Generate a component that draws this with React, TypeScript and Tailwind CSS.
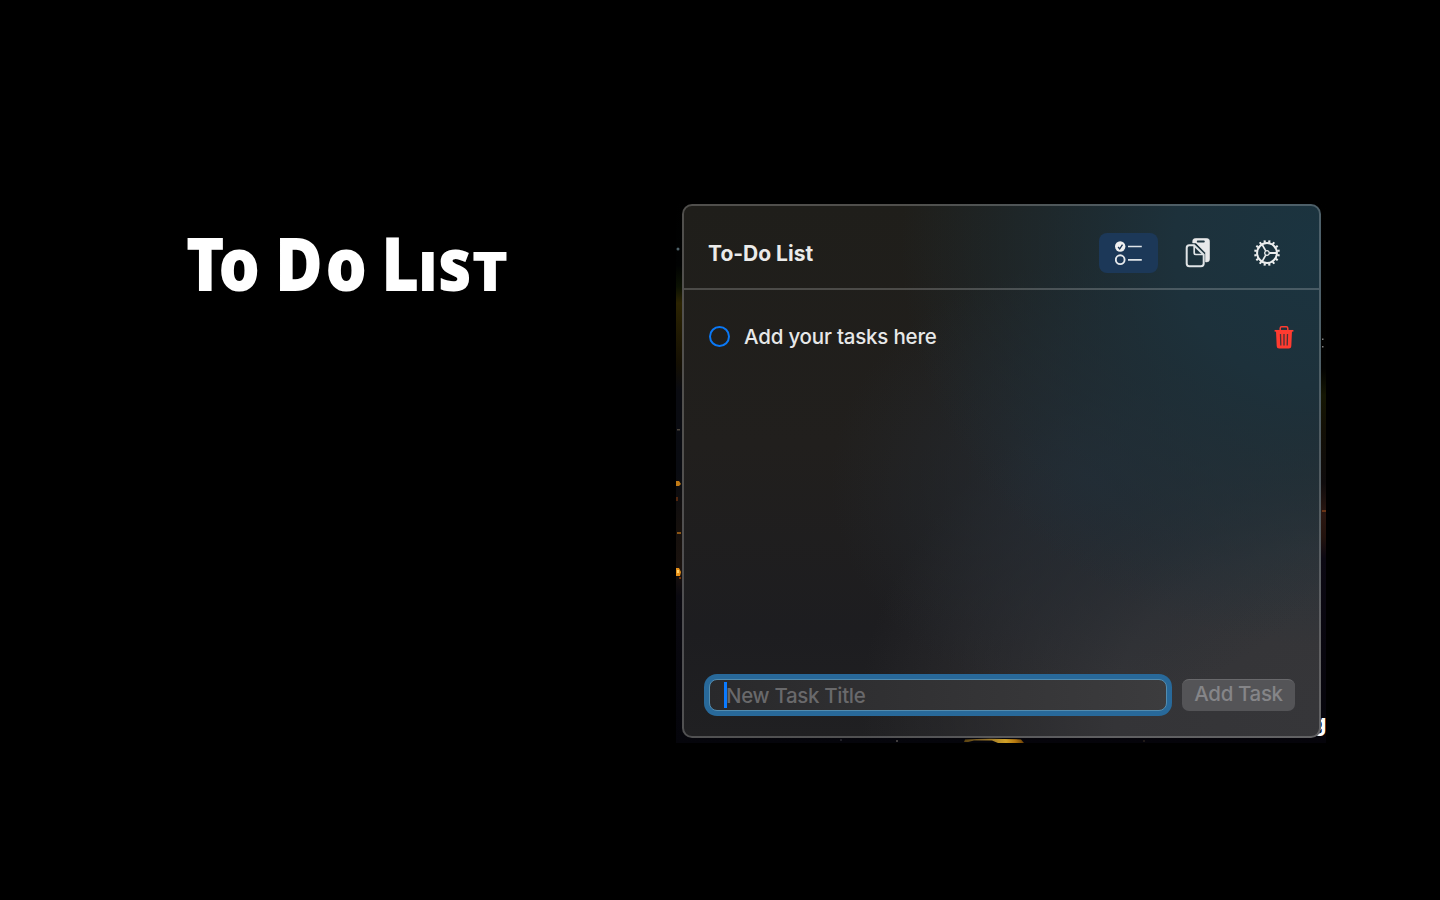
import type { ReactNode } from "react";

function Backdrop() {
  return (
    <svg className="absolute inset-0 h-full w-full" viewBox="0 0 650 543" aria-hidden="true">
      <defs>
        <linearGradient id="edgeLeft" x1="0" y1="0" x2="0" y2="1">
          <stop offset="0" stopColor="#000000" />
          <stop offset="0.12" stopColor="#010202" />
          <stop offset="0.16" stopColor="#0c1203" />
          <stop offset="0.19" stopColor="#2c2402" />
          <stop offset="0.3" stopColor="#151003" />
          <stop offset="0.35" stopColor="#0a0b11" />
          <stop offset="0.5" stopColor="#090b11" />
          <stop offset="0.6" stopColor="#15100d" />
          <stop offset="0.68" stopColor="#1a120e" />
          <stop offset="0.73" stopColor="#0a0910" />
          <stop offset="1" stopColor="#05050b" />
        </linearGradient>
        <linearGradient id="edgeRight" x1="0" y1="0" x2="0" y2="1">
          <stop offset="0" stopColor="#000000" />
          <stop offset="0.31" stopColor="#020201" />
          <stop offset="0.36" stopColor="#141603" />
          <stop offset="0.42" stopColor="#120f05" />
          <stop offset="0.52" stopColor="#0e0b0c" />
          <stop offset="0.58" stopColor="#2a1610" />
          <stop offset="0.62" stopColor="#22120d" />
          <stop offset="0.66" stopColor="#0b0812" />
          <stop offset="1" stopColor="#05040a" />
        </linearGradient>
        <linearGradient id="glow" x1="0" y1="0" x2="1" y2="0">
          <stop offset="0" stopColor="#5b4310" />
          <stop offset="0.3" stopColor="#8a6a2a" />
          <stop offset="0.7" stopColor="#d0a128" />
          <stop offset="0.85" stopColor="#b87a10" />
          <stop offset="1" stopColor="#6a4008" />
        </linearGradient>
      </defs>
      <rect x="0" y="0" width="325" height="543" fill="url(#edgeLeft)" />
      <rect x="325" y="0" width="325" height="543" fill="url(#edgeRight)" />
      <circle cx="2" cy="49" r="1.5" fill="#50636b" />
      <rect x="1" y="229" width="3" height="1.5" fill="#4b443c" />
      <path d="M0 281h3l2 3-2 2H0z" fill="#c07a16" />
      <rect x="0" y="297" width="2" height="4" fill="#51260e" />
      <rect x="1" y="332" width="4" height="2" fill="#8a5515" />
      <path d="M0 368h3l2 4-1 4H0z" fill="#e8921a" />
      <rect x="1" y="370" width="2" height="3" fill="#ffd36b" />
      <rect x="3" y="377" width="2" height="2" fill="#7a3606" />
      <rect x="646" y="138.500" width="1.5" height="1.5" fill="#7d7d7d" />
      <rect x="646" y="146" width="1.5" height="1.5" fill="#7d7d7d" />
      <rect x="646" y="310" width="4" height="2" fill="#6a3416" />
      <path d="M289 539.500q22-1.500 56 0l3 3.500h-26l-6-2.500-18 0-6 1.500h-4z" fill="url(#glow)" />
      <circle cx="221" cy="541" r="1" fill="#55504f" />
      <circle cx="165" cy="540" r="1" fill="#2a2830" />
      <circle cx="468" cy="541" r="1" fill="#29201c" />
    </svg>
  );
}

function ChecklistIcon() {
  return (
    <svg className="h-[26px] w-7" viewBox="0.500 0 28 26" fill="none">
      <circle cx="5.700" cy="6.500" r="5.200" fill="#f0f0f0" />
      <path d="M3.600 7l1.600 1.900L8 4.600" stroke="#1c3656" strokeWidth="1.300" />
      <circle cx="5.700" cy="19.700" r="4.400" stroke="#e6e9ec" strokeWidth="1.900" />
      <path d="M13.500 6.500h13.800M13.500 19.900h13.800" stroke="#dfe4e8" strokeWidth="1.700" />
    </svg>
  );
}

function DocumentsIcon() {
  return (
    <svg className="h-[30px] w-[26px]" viewBox="-0.500 0.500 26 30" fill="none">
      <path
        d="M9.900 1H21.300Q24 1 24 3.700V21.700Q24 24.400 21.300 24.400H20V15.300L10.500 5.400H7.200V3.700Q7.200 1 9.900 1z"
        fill="#e9e9ea"
        stroke="#e9e9ea"
        strokeWidth="0.600"
      />
      <rect x="11.300" y="3" width="8" height="1.900" rx="0.900" fill="#203640" />
      <path
        d="M3.800 7.800H8.500L18.200 17.200V26Q18.200 28.700 15.500 28.700H3.800Q1.200 28.700 1.200 26V10.400Q1.200 7.800 3.800 7.800z"
        fill="#1c313b"
        stroke="#e0e4e6"
        strokeWidth="2"
      />
      <path d="M8.700 8v7.300Q8.700 17 10.400 17h7.600" stroke="#e0e4e6" strokeWidth="1.700" />
    </svg>
  );
}

const TEETH = Array.from({ length: 16 }, (_, i) => i * 22.5 + 11.25);

function GearIcon() {
  return (
    <svg className="h-[28px] w-[28px]" viewBox="-14 -14 28 28" fill="none" stroke="#eceeee">
      <circle r="9.900" strokeWidth="2" />
      {TEETH.map((a) => (
        <path key={a} d="M10.500 0H12.900" strokeWidth="2.100" transform={`rotate(${a})`} />
      ))}
      <circle r="2.300" strokeWidth="1.300" />
      <path d="M2.500 0H9.500" strokeWidth="2" />
      <path d="M2.500 0H9.500" strokeWidth="1.700" transform="rotate(120)" />
      <path d="M2.500 0H9.500" strokeWidth="1.700" transform="rotate(240)" />
    </svg>
  );
}

function TrashIcon() {
  return (
    <svg className="h-6 w-5" viewBox="0 0 20 24" fill="none">
      <path d="M6.200 5V3.300Q6.200 1.700 7.700 1.700h4.600q1.500 0 1.500 1.600V5" stroke="#ff3b30" strokeWidth="1.500" />
      <path d="M.6 5.800h18.800" stroke="#ff3b30" strokeWidth="1.700" />
      <path d="M2 6h16l-.7 15.200q-.1 2.300-2.400 2.300H5.100q-2.300 0-2.400-2.300z" fill="#ff3b30" />
      <path d="M6.500 9l.3 11.500M10 9v11.500M13.500 9l-.3 11.500" stroke="#4b3236" strokeWidth="1.300" />
    </svg>
  );
}

function TabButton({ active, children }: { active?: boolean; children: ReactNode }) {
  return (
    <button
      className={`flex h-10 w-[59px] items-center justify-center rounded-lg ${active ? "bg-[#1c3858]" : ""}`}
    >
      {children}
    </button>
  );
}

function Header() {
  return (
    <header className="flex h-[84px] items-center justify-between border-b-2 border-white/20 pt-[11px] pr-[23px] pl-6">
      <h2 className="pt-0.5 text-[21px] leading-7 font-bold text-[#ebebea]">To-Do List</h2>
      <nav className="flex gap-2.5">
        <TabButton active>
          <ChecklistIcon />
        </TabButton>
        <TabButton>
          <DocumentsIcon />
        </TabButton>
        <TabButton>
          <GearIcon />
        </TabButton>
      </nav>
    </header>
  );
}

function TaskRow({ title }: { title: string }) {
  return (
    <li className="flex h-7 items-center">
      <span className="mb-[2px] h-[21px] w-[21px] rounded-full border-2 border-[#0a78f5]" />
      <span className="ml-3.5 flex-1 text-[20.500px] leading-7 font-[450] tracking-[-0.2px] text-[#e7e8e8]">
        {title}
      </span>
      <button className="pb-px">
        <TrashIcon />
      </button>
    </li>
  );
}

function Composer() {
  return (
    <div className="flex items-center gap-2.5 pr-6 pl-5">
      <div className="h-[42px] w-[468px] rounded-[13px] bg-[#28699a] p-[5px]">
        <div className="flex h-8 items-center rounded-lg border border-[#538caf] bg-gradient-to-r from-[#29292b] to-[#3c3c3e] pl-[14px]">
          <span className="h-[26px] w-[3px] bg-[#0a7aff]" />
          <span className="-ml-px pt-px text-[20.500px] leading-7 font-[450] tracking-[-0.32px] text-[#69696b]">
            New Task Title
          </span>
        </div>
      </div>
      <button className="h-8 w-[113px] rounded-[7px] border-t border-[#69696c] bg-[#545457] pb-[3px] text-[20.500px] leading-7 font-[450] tracking-[-0.35px] text-[#858588]">
        Add Task
      </button>
    </div>
  );
}

export default function App() {
  return (
    <main className="flex h-[900px] w-[1440px] bg-black font-['Inter',sans-serif]">
      <section className="w-[676px] pt-[213px] pl-[186px]">
        <h1 className="flex origin-left scale-x-[0.88] items-baseline font-['Open_Sans',sans-serif] text-[74px] leading-[100px] font-extrabold whitespace-pre text-white">
          <span className="w-[37px]">T</span>
          <span className="w-[64px]">o </span>
          <span className="w-[57.500px]">D</span>
          <span className="w-[63.500px]">o </span>
          <span className="w-[40.500px]">L</span>
          <span className="w-[24px] origin-left scale-x-125 text-[54px] uppercase">i</span>
          <span className="w-[38px]">s</span>
          <span className="origin-left scale-x-[1.28] text-[54px] uppercase">t</span>
        </h1>
      </section>
      <section className="relative mt-[200px] h-[543px] w-[650px] overflow-hidden pt-1 pl-1.5">
        <Backdrop />
        <span className="absolute top-[509px] left-[636px] text-[23px] leading-7 font-bold text-white">g</span>
        <div className="relative flex h-[534px] w-[639px] flex-col rounded-[10px] border-2 border-white/22 bg-[#26282b] bg-[radial-gradient(ellipse_420px_400px_at_100%_8%,#1b3440_0%,#1d313b_35%,transparent_100%),radial-gradient(ellipse_260px_220px_at_64%_52%,#242b33_0%,transparent_100%),radial-gradient(ellipse_460px_360px_at_100%_95%,#363639_0%,#343437_45%,transparent_100%),linear-gradient(180deg,#1f1e1a_0%,#211f1d_45%,#1d1d20_80%,#202022_100%)] bg-origin-border">
          <Header />
          <ul className="flex-1 pt-[33px] pr-[25px] pl-[25px]">
            <TaskRow title="Add your tasks here" />
          </ul>
          <div className="pb-5">
            <Composer />
          </div>
        </div>
      </section>
    </main>
  );
}
